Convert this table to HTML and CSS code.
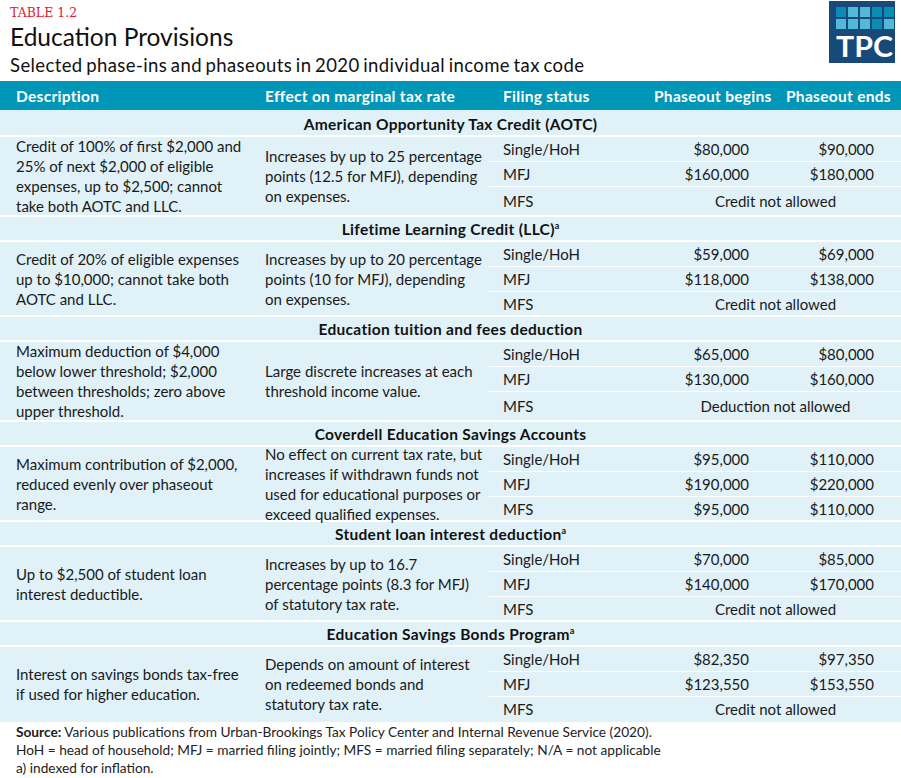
FILE: index.html
```html
<!DOCTYPE html>
<html lang="en">
<head>
<meta charset="utf-8">
<title>Education Provisions</title>
<link rel="stylesheet" href="styles.css">
</head>
<body>
<div class="page">
  <header class="top">
    <div class="heading">
      <div class="label">TABLE 1.2</div>
      <h1 class="title">Education Provisions</h1>
      <p class="subtitle">Selected phase-ins and phaseouts in 2020 individual income tax code</p>
    </div>
    <svg class="logo" width="66" height="62" viewBox="0 0 66 62" aria-label="TPC">
      <rect x="0" y="0" width="66" height="62" fill="#17497b"/>
      <rect x="7" y="6" width="10" height="10" fill="#0a8db4"/>
      <rect x="19" y="6" width="10" height="10" fill="#52b9d6"/>
      <rect x="31" y="6" width="10" height="10" fill="#52b9d6"/>
      <rect x="43" y="6" width="10" height="10" fill="#0a8db4"/>
      <rect x="55" y="6" width="10" height="10" fill="#0a8db4"/>
      <rect x="7" y="18" width="10" height="10" fill="#52b9d6"/>
      <rect x="19" y="18" width="10" height="10" fill="#52b9d6"/>
      <rect x="31" y="18" width="10" height="10" fill="#52b9d6"/>
      <rect x="43" y="18" width="10" height="10" fill="#0a8db4"/>
      <rect x="55" y="18" width="10" height="10" fill="#52b9d6"/>
      <text x="7" y="56" class="logo-text" textLength="57" lengthAdjust="spacingAndGlyphs">TPC</text>
    </svg>
  </header>

  <div class="table">
    <div class="thead">
      <div class="th c1">Description</div>
      <div class="th c2">Effect on marginal tax rate</div>
      <div class="th c3">Filing status</div>
      <div class="th c4">Phaseout begins</div>
      <div class="th c5">Phaseout ends</div>
    </div>

    <section class="group first">
      <div class="group-title">American Opportunity Tax Credit (AOTC)</div>
      <div class="group-body">
        <div class="desc">Credit of 100% of first $2,000 and<br>25% of next $2,000 of eligible<br>expenses, up to $2,500; cannot<br>take both AOTC and LLC.</div>
        <div class="effect">Increases by up to 25 percentage<br>points (12.5 for MFJ), depending<br>on expenses.</div>
        <div class="status r1">Single/HoH</div><div class="num c4 r1">$80,000</div><div class="num c5 r1">$90,000</div>
        <div class="status r2">MFJ</div><div class="num c4 r2">$160,000</div><div class="num c5 r2">$180,000</div>
        <div class="status r3">MFS</div><div class="na r3">Credit not allowed</div>
      </div>
    </section>

    <section class="group">
      <div class="group-title">Lifetime Learning Credit (LLC)<sup>a</sup></div>
      <div class="group-body">
        <div class="desc">Credit of 20% of eligible expenses<br>up to $10,000; cannot take both<br>AOTC and LLC.</div>
        <div class="effect">Increases by up to 20 percentage<br>points (10 for MFJ), depending<br>on expenses.</div>
        <div class="status r1">Single/HoH</div><div class="num c4 r1">$59,000</div><div class="num c5 r1">$69,000</div>
        <div class="status r2">MFJ</div><div class="num c4 r2">$118,000</div><div class="num c5 r2">$138,000</div>
        <div class="status r3">MFS</div><div class="na r3">Credit not allowed</div>
      </div>
    </section>

    <section class="group">
      <div class="group-title">Education tuition and fees deduction</div>
      <div class="group-body">
        <div class="desc">Maximum deduction of $4,000<br>below lower threshold; $2,000<br>between thresholds; zero above<br>upper threshold.</div>
        <div class="effect">Large discrete increases at each<br>threshold income value.</div>
        <div class="status r1">Single/HoH</div><div class="num c4 r1">$65,000</div><div class="num c5 r1">$80,000</div>
        <div class="status r2">MFJ</div><div class="num c4 r2">$130,000</div><div class="num c5 r2">$160,000</div>
        <div class="status r3">MFS</div><div class="na r3">Deduction not allowed</div>
      </div>
    </section>

    <section class="group">
      <div class="group-title">Coverdell Education Savings Accounts</div>
      <div class="group-body">
        <div class="desc">Maximum contribution of $2,000,<br>reduced evenly over phaseout<br>range.</div>
        <div class="effect tight">No effect on current tax rate, but<br>increases if withdrawn funds not<br>used for educational purposes or<br>exceed qualified expenses.</div>
        <div class="status r1">Single/HoH</div><div class="num c4 r1">$95,000</div><div class="num c5 r1">$110,000</div>
        <div class="status r2">MFJ</div><div class="num c4 r2">$190,000</div><div class="num c5 r2">$220,000</div>
        <div class="status r3">MFS</div><div class="num c4 r3">$95,000</div><div class="num c5 r3">$110,000</div>
      </div>
    </section>

    <section class="group">
      <div class="group-title">Student loan interest deduction<sup>a</sup></div>
      <div class="group-body">
        <div class="desc">Up to $2,500 of student loan<br>interest deductible.</div>
        <div class="effect">Increases by up to 16.7<br>percentage points (8.3 for MFJ)<br>of statutory tax rate.</div>
        <div class="status r1">Single/HoH</div><div class="num c4 r1">$70,000</div><div class="num c5 r1">$85,000</div>
        <div class="status r2">MFJ</div><div class="num c4 r2">$140,000</div><div class="num c5 r2">$170,000</div>
        <div class="status r3">MFS</div><div class="na r3">Credit not allowed</div>
      </div>
    </section>

    <section class="group last">
      <div class="group-title">Education Savings Bonds Program<sup>a</sup></div>
      <div class="group-body">
        <div class="desc">Interest on savings bonds tax-free<br>if used for higher education.</div>
        <div class="effect">Depends on amount of interest<br>on redeemed bonds and<br>statutory tax rate.</div>
        <div class="status r1">Single/HoH</div><div class="num c4 r1">$82,350</div><div class="num c5 r1">$97,350</div>
        <div class="status r2">MFJ</div><div class="num c4 r2">$123,550</div><div class="num c5 r2">$153,550</div>
        <div class="status r3">MFS</div><div class="na r3">Credit not allowed</div>
      </div>
    </section>
  </div>

  <footer class="notes">
    <p><strong>Source:</strong> Various publications from Urban-Brookings Tax Policy Center and Internal Revenue Service (2020).</p>
    <p>HoH = head of household; MFJ = married filing jointly; MFS = married filing separately; N/A = not applicable</p>
    <p>a) indexed for inflation.</p>
  </footer>
</div>
</body>
</html>
```

FILE: styles.css
```css
* { box-sizing: border-box; }

html, body {
  margin: 0;
  padding: 0;
  background: #ffffff;
}

.page {
  width: 901px;
  font-family: "Lato", "Noto Sans", sans-serif;
  color: #1a1a1a;
}

/* ---------- heading ---------- */
.top {
  height: 81px;
  display: flex;
  justify-content: space-between;
  align-items: flex-start;
  padding: 0 6px 0 10px;
}

.heading {
  display: flex;
  flex-direction: column;
}

.label {
  font-family: "DejaVu Serif", "Liberation Serif", serif;
  font-size: 12.5px;
  line-height: 16px;
  color: #e3192e;
  margin-top: 5px;
}

.title {
  margin: 2px 0 0 0;
  font-size: 24.5px;
  line-height: 28px;
  font-weight: 400;
  color: #111;
}

.subtitle {
  margin: 3px 0 0 0;
  font-size: 18.5px;
  line-height: 22px;
  color: #111;
  letter-spacing: 0.4px;
  word-spacing: -1.5px;
}

.logo {
  margin-top: 1px;
  display: block;
}

.logo-text {
  font-family: "Lato", "DejaVu Sans", sans-serif;
  font-weight: 700;
  font-size: 29px;
  fill: #ffffff;
}

/* ---------- table ---------- */
.table {
  background: #e0f1f8;
  font-size: 15px;
}

.thead {
  display: grid;
  grid-template-columns: 250px 238px 162px 114px 137px;
  height: 29px;
  background: #0096b8;
  color: #ffffff;
  font-weight: 700;
  font-size: 15.5px;
  letter-spacing: 0.3px;
  align-items: center;
}

.th {
  white-space: nowrap;
}

.th.c1 { padding-left: 16px; }
.th.c2 { padding-left: 15px; }
.th.c3 { padding-left: 15px; }
.th.c4 { padding-left: 4px; }
.th.c5 { padding-left: 22px; }

.group-title {
  height: 25px;
  padding-top: 1px;
  line-height: 22px;
  border-bottom: 2px solid #ffffff;
  text-align: center;
  font-weight: 700;
  font-size: 15.5px;
  letter-spacing: 0.3px;
  color: #111;
}

.group.first .group-title {
  height: 27px;
  padding-top: 3px;
}

.group-title sup {
  font-size: 9px;
  line-height: 0;
  vertical-align: 6px;
  letter-spacing: 0;
}

.group-body {
  display: grid;
  grid-template-columns: 250px 238px 162px 114px 137px;
  grid-template-rows: 25px 25px minmax(23px, auto);
  border-bottom: 2px solid #ffffff;
}

.group.last .group-body {
  border-bottom-color: #e0f1f8;
}

.desc {
  grid-column: 1;
  grid-row: 1 / 4;
  align-self: center;
  padding-left: 16px;
  line-height: 20px;
  margin: -1px 0;
  white-space: nowrap;
}

.effect {
  grid-column: 2;
  grid-row: 1 / 4;
  align-self: center;
  padding-left: 15px;
  line-height: 20px;
  margin: -1px 0;
  white-space: nowrap;
}

.effect.tight {
  margin: -4px 0;
}

.status, .num, .na {
  display: flex;
  align-items: center;
  white-space: nowrap;
}

.status {
  grid-column: 3;
  padding-left: 15px;
}

.num {
  justify-content: flex-end;
}

.num.c4 { grid-column: 4; padding-right: 15px; }
.num.c5 { grid-column: 5; padding-right: 27px; }

.na {
  grid-column: 4 / 6;
  justify-content: center;
}

.r1 { grid-row: 1; border-bottom: 1px solid #ffffff; }
.r2 { grid-row: 2; border-bottom: 1px solid #ffffff; }
.r3 { grid-row: 3; }

/* ---------- notes ---------- */
.notes {
  padding: 1px 0 0 16px;
  font-size: 13.7px;
  line-height: 18px;
  color: #222;
}

.notes p {
  margin: 0;
}

.notes strong {
  font-weight: 700;
}
```
